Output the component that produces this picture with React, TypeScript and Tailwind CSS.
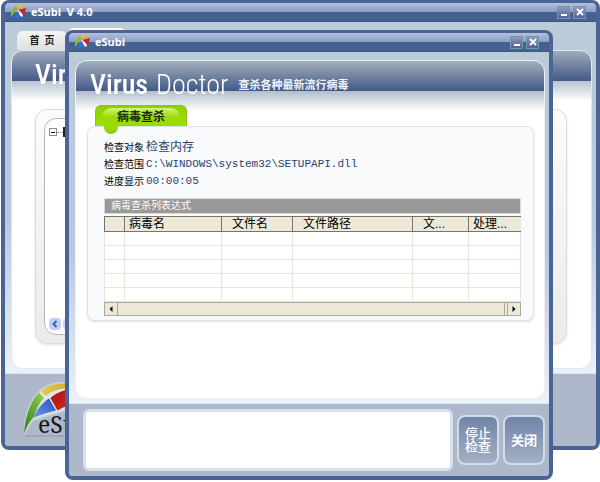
import React, { useState } from 'react';

const columns = [
  { label: '', width: 'w-[20px]', pad: '' },
  { label: '病毒名', width: 'w-[97px]', pad: 'pl-1' },
  { label: '文件名', width: 'w-[71px]', pad: 'pl-2.5' },
  { label: '文件路径', width: 'w-[120px]', pad: 'pl-2.5' },
  { label: '文...', width: 'w-[56px]', pad: 'pl-2.5' },
  { label: '处理...', width: '', pad: 'pl-1' },
];

const rows = [0, 1, 2, 3, 4];

const SmallLogo: React.FC = () => (
  <svg viewBox="0 0 16 16" className="h-4 w-4 shrink-0" aria-hidden="true">
    <path d="M0 13C0 7 3 2.500 7 1C10 0.200 13 0.200 16 0.800C12 1.600 9.500 2.600 7.500 4.500C4 7 2 9.500 0 13Z" fill="#f0b93a" />
    <path d="M0 13C0 8 2 4 5 2.200L7 4.500C4 7 2 9.500 0 13Z" fill="#7fbb3a" />
    <path d="M6.500 5.500L12 8L11.500 13L9 12Z" fill="#f4f6fb" />
    <path d="M7.500 6L15 4L13 11.500Z" fill="#c8231b" />
    <path d="M1.500 14.500L6 8L10 13Z" fill="#2f6fd6" />
  </svg>
);

const BigLogo: React.FC = () => (
  <svg viewBox="0 0 90 58" className="h-[58px] w-[90px]" role="img" aria-label="eSubi">
    <defs>
      <linearGradient id="green" x1="0" y1="1" x2="1" y2="0">
        <stop offset="0" stopColor="#2f7d1f" />
        <stop offset="1" stopColor="#9ad04a" />
      </linearGradient>
      <linearGradient id="yellow" x1="0" y1="0" x2="1" y2="0">
        <stop offset="0" stopColor="#e3cc50" />
        <stop offset="1" stopColor="#c9a21c" />
      </linearGradient>
      <linearGradient id="blue" x1="0" y1="1" x2="1" y2="0">
        <stop offset="0" stopColor="#6c9cf0" />
        <stop offset="1" stopColor="#2450b8" />
      </linearGradient>
      <linearGradient id="red" x1="0" y1="0" x2="1" y2="1">
        <stop offset="0" stopColor="#a80f10" />
        <stop offset="1" stopColor="#e02a20" />
      </linearGradient>
    </defs>
    <path d="M0 53C1 34 6 19 16 9C26 0 42 -1 60 4C70 8 78 16 82 30L42 28L9 38C5 42 2 48 0 53Z" fill="#dfe5e6" stroke="#c9d3da" strokeWidth="2" />
    <path d="M0 52C1 36 6 20 15 10.500L20 16C14 22 11 32 9 36C5 40 2 46 0 52Z" fill="url(#green)" />
    <path d="M17 9C25 1.500 38 0 56 3L54 8C42 4 30 7 21.500 14Z" fill="url(#yellow)" />
    <path d="M9 36C12 29 18 21 25 16.500L32 28.500C24 30 16 33 9 36Z" fill="url(#blue)" />
    <path d="M26.500 16C32 11 40 7 52 7L48 22C42 24 38 26 33.500 28.500Z" fill="url(#red)" />
    <text x="14" y="51" fontFamily="'Noto Serif', 'Liberation Serif', serif" fontSize="23" fill="#141414">eSubi</text>
    <path d="M1 54H90" stroke="#8d99a8" strokeWidth="1" />
  </svg>
);

const TitleBar: React.FC<{ title: string }> = ({ title }) => (
  <header className="flex h-[19px] shrink-0 items-center gap-1 border-b border-[#3b5584] bg-[linear-gradient(#b3bfdb_0,#8a9fc4_9px,#45618f_9px,#45618f_100%)] pl-1.5 pr-2.5">
    <SmallLogo />
    <h1 className="flex-1 whitespace-pre font-['Open_Sans',sans-serif] text-[11px] font-bold leading-4 text-white">{title}</h1>
    <div className="flex gap-[3px]">
      <button type="button" aria-label="最小化" className="flex h-[13px] w-[13px] items-end justify-center border border-[#6f9aa5] bg-[linear-gradient(#8b9ac0,#5a5f94)] pb-0.5">
        <span className="h-0.5 w-1.5 bg-white" />
      </button>
      <button type="button" aria-label="关闭窗口" className="flex h-[13px] w-[13px] items-center justify-center border border-[#6f9aa5] bg-[linear-gradient(#8b9ac0,#5a5f94)]">
        <svg viewBox="0 0 8 8" className="h-2 w-2" aria-hidden="true">
          <path d="M1 1L7 7M7 1L1 7" stroke="#fff" strokeWidth="1.800" />
        </svg>
      </button>
    </div>
  </header>
);

const Brand: React.FC<{ first: string; second?: string }> = ({ first, second }) => (
  <h2 className="flex gap-2 whitespace-nowrap font-['Roboto_Condensed',Roboto,'Liberation_Sans',sans-serif] text-[28px] leading-8 text-white [-webkit-box-reflect:below_-12px_linear-gradient(transparent_55%,rgba(255,255,255,0.25))]">
    <span className="font-medium">{first}</span>
    {second && <span className="font-light">{second}</span>}
  </h2>
);

const MainWindow: React.FC = () => (
  <section className="flex min-w-0 flex-1 flex-col overflow-hidden rounded-lg border-4 border-t-[3px] border-[#4a6595] bg-[linear-gradient(#bccbd7,#b9c9df_50%,#edf3fa_85%)]">
    <TitleBar title="eSubi  V 4.0" />
    <div className="flex flex-1 flex-col pb-1 pl-1.5 pr-1 pt-1.5">
      <nav className="flex h-[22px] items-end gap-px pl-1.5">
        <a href="#home" className="flex h-[19px] w-[50px] items-center justify-center rounded-t-md bg-[linear-gradient(#f5f5f5,#dcdfe3)] text-[10px] font-bold text-[#222]">首&ensp;页</a>
        <a href="#scan" aria-label="病毒查杀" className="h-[22px] w-[58px] rounded-t-md bg-white" />
      </nav>
      <div className="flex flex-1 flex-col rounded-xl border border-[#e3e8ee] bg-[linear-gradient(#9fabbb_0,#435887_30px,#b8c3d1_30px,#fff_50px)] pb-6 pl-[23px] pr-6">
        <div className="h-[58px] pt-2">
          <Brand first="Vir" />
        </div>
        <div className="flex flex-1 flex-col rounded-xl border border-[#dcdcdc] bg-[linear-gradient(#fbfbfb,#ebebeb)] py-2 pl-2 pr-6 shadow">
          <div className="flex flex-1 flex-col justify-between rounded-xl border border-[#b4b8bd] bg-white p-1">
            <div className="flex items-center pt-1">
              <button type="button" aria-label="折叠" className="flex h-2 w-2 items-center justify-center border border-[#8c8c8c]">
                <span className="h-px w-1 bg-black" />
              </button>
              <span className="w-1.5 border-t border-dotted border-[#888]" />
              <span className="h-2.5 w-3 border-2 border-[#222]" />
            </div>
            <div className="flex">
              <button type="button" aria-label="向左滚动" className="flex h-3 w-3 items-center justify-center rounded-sm bg-[#bdd0fb]">
                <svg viewBox="0 0 8 8" className="h-2 w-2" aria-hidden="true">
                  <path d="M5.500 1L2.500 4L5.500 7" fill="none" stroke="#3c5a94" strokeWidth="1.800" />
                </svg>
              </button>
              <span className="ml-0.5 h-3 w-20 rounded-sm bg-[#c6d6fb]" />
            </div>
          </div>
        </div>
      </div>
    </div>
    <footer className="h-[73px] border-t border-[#dbe5ee] bg-[#adb8cb] pl-[19px] pt-2">
      <BigLogo />
    </footer>
  </section>
);

const VirusTable: React.FC = () => (
  <div>
    <table className="w-full table-fixed border-collapse border-l border-[#8d8d86] bg-white text-xs">
      <caption className="mb-0.5 border border-[#d8d8d8] bg-[#999] pl-1.5 text-left text-[10px] leading-[14px] text-white">病毒查杀列表达式</caption>
      <thead>
        <tr className="h-[15px]">
          {columns.map((col, i) => (
            <th key={i} scope="col" className={`${col.width} ${col.pad} whitespace-nowrap border-b border-l border-t border-[#77756a] bg-[#ece9d8] text-left font-normal leading-[13px]`}>
              {col.label}
            </th>
          ))}
        </tr>
      </thead>
      <tbody>
        {rows.map((row) => (
          <tr key={row} className="h-[14px]">
            {columns.map((_, i) => (
              <td key={i} className="border border-[#e7e6da] p-0" />
            ))}
          </tr>
        ))}
      </tbody>
    </table>
    <div className="flex h-[14px] border border-[#aca899] bg-[#ece9d8]">
      <button type="button" aria-label="向左" className="flex w-[13px] items-center justify-center border-r border-[#aca899]">
        <svg viewBox="0 0 6 8" className="h-2 w-1.5" aria-hidden="true"><path d="M4.500 1L1.500 4L4.500 7Z" /></svg>
      </button>
      <div className="mr-0.5 flex-1 border-r border-[#aca899] bg-[#ece7d9]" />
      <button type="button" aria-label="向右" className="flex w-[13px] items-center justify-center border-l border-[#aca899]">
        <svg viewBox="0 0 6 8" className="h-2 w-1.5" aria-hidden="true"><path d="M1.500 1L4.500 4L1.500 7Z" /></svg>
      </button>
    </div>
  </div>
);

const ScanWindow: React.FC = () => {
  const [log, setLog] = useState('');

  return (
    <section className="absolute bottom-0.5 left-[65px] right-[47px] top-[30px] flex flex-col overflow-hidden rounded-lg border-4 border-t-[3px] border-[#4a6595] bg-[linear-gradient(#bccbd7,#b9c9df_50%,#edf3fa_85%)]">
      <TitleBar title="eSubi" />
      <div className="flex flex-1 flex-col pb-1 pl-1.5 pr-1 pt-2">
        <div className="flex-1 rounded-xl border border-[#eef2f5] bg-[linear-gradient(#a3b0bd_0,#435887_30px,#b2becd_30px,#fff_50px)]">
          {/* Banner */}
          <div className="flex h-11 items-center gap-2.5 pl-3.5 pt-1">
            <Brand first="Virus" second="Doctor" />
            <p className="text-[11px] font-bold leading-4 text-[#eef3fb]">查杀各种最新流行病毒</p>
          </div>

          {/* Scan card */}
          <div className="pl-[11px] pr-2.5">
            <div className="ml-2 h-[21px] w-[92px] rounded-t-md border border-b-0 border-[#8fc01a] bg-[linear-gradient(#8fd000,#a0e000)] px-1.5 pt-0.5">
              <h3 className="rounded-full bg-[linear-gradient(#d4f47a,#9bdb05_50%)] text-center text-xs font-bold leading-[18px] text-[#1c2a08]">病毒查杀</h3>
            </div>
            <div className="relative rounded-lg border border-[#dfe3e7] bg-[#f8fafc] pb-1 pl-4 pr-3 pt-3 shadow">
              <span className="absolute -top-px left-4 h-2 w-3.5 rounded-b-full bg-[linear-gradient(#a0e000,#8cc800)]" />
              <dl className="mb-2 grid grid-cols-[40px_1fr] gap-x-0.5 text-[10px] leading-[17px] text-black">
                <dt>检查对象</dt>
                <dd className="text-xs leading-[17px] text-[#2c4272]">检查内存</dd>
                <dt>检查范围</dt>
                <dd className="font-['Liberation_Mono',monospace] text-[11px] text-[#2c4272]">C:\WINDOWS\system32\SETUPAPI.dll</dd>
                <dt>进度显示</dt>
                <dd className="font-['Liberation_Mono',monospace] text-[11px] text-[#2c4272]">00:00:05</dd>
              </dl>
              <VirusTable />
            </div>
          </div>
        </div>
      </div>
      <footer className="flex h-[73px] items-center gap-1 border-t border-[#dbe5ee] bg-[#adb8cb] pl-3.5 pr-1">
        <textarea
          aria-label="扫描日志"
          value={log}
          onChange={(e) => setLog(e.target.value)}
          className="h-[62px] min-w-0 flex-1 resize-none rounded-md border-[3px] border-[#d6e1eb] bg-white text-xs"
        />
        <button type="button" className="flex h-[50px] w-[42px] items-center justify-center rounded-lg border-2 border-[#d3dce8] bg-[linear-gradient(#7185a8,#a3b0c4)] px-1.5 text-[13px] font-medium leading-[13px] text-white">停止检查</button>
        <button type="button" className="flex h-[50px] w-[42px] items-center justify-center rounded-lg border-2 border-[#d3dce8] bg-[linear-gradient(#7185a8,#a3b0c4)] text-[13px] font-bold leading-[13px] text-white">关闭</button>
      </footer>
    </section>
  );
};

const App: React.FC = () => {
  return (
    <main className="relative flex min-h-screen bg-white pb-8 pl-px font-['Liberation_Sans','Noto_Sans_CJK_SC',sans-serif]">
      <MainWindow />
      <ScanWindow />
    </main>
  );
};

export default App;
